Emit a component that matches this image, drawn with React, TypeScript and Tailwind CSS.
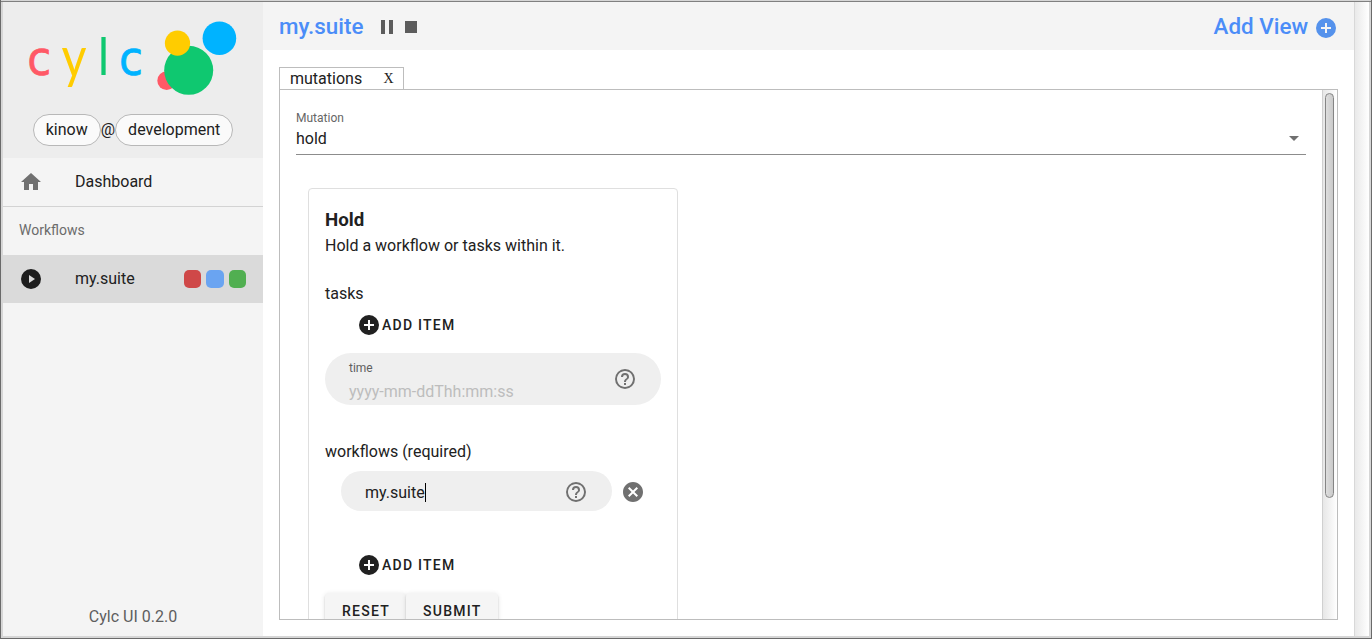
import type { ReactNode } from 'react';

const icons = {
  home: 'M10,20V14H14V20H19V12H22L12,3L2,12H5V20H10Z',
  play: 'M10,16V8L16,12M12,2A10,10 0 0,0 2,12A10,10 0 0,0 12,22A10,10 0 0,0 22,12A10,10 0 0,0 12,2Z',
  pause: 'M14,19H18V5H14M6,19H10V5H6V19Z',
  stop: 'M18,18H6V6H18V18Z',
  plus: 'M17,13H13V17H11V13H7V11H11V7H13V11H17M12,2A10,10 0 0,0 2,12A10,10 0 0,0 12,22A10,10 0 0,0 22,12A10,10 0 0,0 12,2Z',
  help: 'M11,18H13V16H11V18M12,2A10,10 0 0,0 2,12A10,10 0 0,0 12,22A10,10 0 0,0 22,12A10,10 0 0,0 12,2M12,20C7.59,20 4,16.41 4,12C4,7.59 7.59,4 12,4C16.41,4 20,7.59 20,12C20,16.41 16.41,20 12,20M12,6A4,4 0 0,0 8,10H10A2,2 0 0,1 12,8A2,2 0 0,1 14,10C14,12 11,11.75 11,15H13C13,12.75 16,12.5 16,10A4,4 0 0,0 12,6Z',
  close: 'M12,2C17.53,2 22,6.47 22,12C22,17.53 17.53,22 12,22C6.47,22 2,17.53 2,12C2,6.47 6.47,2 12,2M15.59,7L12,10.59L8.41,7L7,8.41L10.59,12L7,15.59L8.41,17L12,13.41L15.59,17L17,15.59L13.41,12L17,8.41L15.59,7Z',
  menuDown: 'M7,10L12,15L17,10H7Z',
};

function Icon({ name, className }: { name: keyof typeof icons; className: string }) {
  return (
    <svg viewBox="0 0 24 24" className={`size-6 shrink-0 fill-current ${className}`}>
      <path d={icons[name]} />
    </svg>
  );
}

function Logo() {
  return (
    <svg viewBox="0 0 260 112" className="h-[112px] w-[260px] shrink-0">
      <g fontFamily="'DejaVu Sans', sans-serif" fontSize="48.5" strokeWidth="0.7">
        <text x="24.3" y="73" fill="#ff5966" stroke="#ff5966" textLength="24" lengthAdjust="spacingAndGlyphs">c</text>
        <text x="58.6" y="75" fill="#ffcc00" fontFamily="Lato, sans-serif" fontSize="57" textLength="25" lengthAdjust="spacingAndGlyphs">y</text>
        <text x="94" y="72.8" fill="#0fc870" fontSize="50" textLength="13" lengthAdjust="spacingAndGlyphs">l</text>
        <text x="116" y="73" fill="#00b3ff" stroke="#00b3ff" textLength="24" lengthAdjust="spacingAndGlyphs">c</text>
      </g>
      <circle cx="163.7" cy="78.7" r="9.4" fill="#ff5966" />
      <circle cx="185.7" cy="68.3" r="24.5" fill="#0fc870" />
      <circle cx="174.5" cy="41.2" r="12.6" fill="#ffcc00" />
      <circle cx="216.4" cy="36.2" r="16.8" fill="#00b3ff" />
    </svg>
  );
}

function Chip({ children }: { children: ReactNode }) {
  return (
    <span className="flex h-8 items-center rounded-full border border-[#b8b8b8] bg-[#fafafa] px-3">{children}</span>
  );
}

function AddItem() {
  return (
    <div className="flex h-9 items-center pl-8 text-sm font-medium">
      <Icon name="plus" className="text-[#212121]" />
      <span className="ml-px tracking-[1.25px]">ADD ITEM</span>
    </div>
  );
}

function Sidebar() {
  return (
    <aside className="flex w-[260px] shrink-0 flex-col bg-[#f4f4f4]">
      <div className="flex h-[156px] flex-col items-center bg-[#ededed]">
        <Logo />
        <div className="flex items-center">
          <Chip>kinow</Chip>
          <span>@</span>
          <Chip>development</Chip>
        </div>
      </div>
      <div className="flex h-[49px] items-center border-b border-[#d3d3d3] pl-4">
        <Icon name="home" className="text-[#707070]" />
        <span className="ml-8">Dashboard</span>
      </div>
      <div className="flex h-12 items-center pb-0.5 pl-4 text-sm text-[#6b6b6b]">Workflows</div>
      <div className="flex h-12 items-center bg-[#dadada] pl-4">
        <Icon name="play" className="text-[#1e1e1e]" />
        <span className="ml-8 flex-1">my.suite</span>
        <div className="mr-[17px] flex gap-[5px]">
          <span className="size-[17.5px] rounded-[5px] bg-[#cf4848]" />
          <span className="size-[17.5px] rounded-[5px] bg-[#6aa4f1]" />
          <span className="size-[17.5px] rounded-[5px] bg-[#51af51]" />
        </div>
      </div>
      <div className="mt-auto pb-[7px] text-center text-[#5e5e5e]">Cylc UI 0.2.0</div>
    </aside>
  );
}

function HoldCard() {
  return (
    <section className="ml-3 mt-[33px] w-[370px] rounded border border-[#dfdfdf] px-4 pt-[18px]">
      <h3 className="h-[27px] text-[18.72px] font-bold leading-[26px]">Hold</h3>
      <p className="h-6">Hold a workflow or tasks within it.</p>
      <div className="mt-6 h-6">tasks</div>
      <div className="mt-px"><AddItem /></div>
      <div className="mt-[10px] flex h-[52px] items-center justify-between rounded-full bg-[#efefef] px-6">
        <div className="pt-[5px]">
          <div className="h-[21px] text-xs leading-5 text-[#606060]">time</div>
          <div className="h-[26px] leading-[26px] text-[#bdbdbd]">yyyy-mm-ddThh:mm:ss</div>
        </div>
        <Icon name="help" className="text-[#707070]" />
      </div>
      <div className="mt-[35px] h-6">workflows (required)</div>
      <div className="mt-[7px] flex h-10 items-center pl-4">
        <div className="flex h-10 w-[271px] items-center rounded-full bg-[#efefef] px-6 pt-0.5">
          <span className="pt-0.5">my.suite</span>
          <span className="h-[19px] w-px bg-black" />
          <Icon name="help" className="ml-auto text-[#707070]" />
        </div>
        <Icon name="close" className="ml-[9px] mt-0.5 text-[#707070]" />
      </div>
      <div className="mt-9"><AddItem /></div>
      <div className="mt-[10px] flex h-9 text-sm font-medium tracking-[1.25px]">
        <button className="rounded bg-[#f5f5f5] pl-[17px] pr-4 shadow-[0_3px_1px_-2px_rgba(0,0,0,.2),0_2px_2px_0_rgba(0,0,0,.14),0_1px_5px_0_rgba(0,0,0,.12)]">RESET</button>
        <button className="rounded bg-[#f5f5f5] pl-[17px] pr-4 shadow-[0_3px_1px_-2px_rgba(0,0,0,.2),0_2px_2px_0_rgba(0,0,0,.14),0_1px_5px_0_rgba(0,0,0,.12)]">SUBMIT</button>
      </div>
    </section>
  );
}

export default function App() {
  return (
    <div className="h-[639px] w-[1372px] overflow-hidden border-x border-b border-[#6a6a6a] bg-[#d6d6d6] font-[Roboto,sans-serif] text-base leading-6 text-[#212121]">
      <div className="mt-px flex h-[637px] border-t border-[#808080] pb-[2px] pl-[2px] pr-[2px]">
        <Sidebar />
        <main className="flex min-w-0 flex-1 flex-col bg-white">
          <header className="flex h-12 shrink-0 items-center bg-[#f4f4f4] pl-4 pr-4 text-[#4b8df8]">
            <span className="text-[22.4px] font-medium">my.suite</span>
            <Icon name="pause" className="ml-3 mt-0.5 text-[#5c5c5c]" />
            <Icon name="stop" className="mt-0.5 text-[#5c5c5c]" />
            <span className="ml-auto text-[22.4px] font-medium">Add View</span>
            <Icon name="plus" className="ml-1.5 mt-[3px] text-[#5592ec]" />
          </header>
          <div className="mx-4 mt-[17px] flex h-[22px]">
            <div className="flex w-[125px] items-center justify-between border-x border-t border-[#bdbdbd] bg-white pl-[10px] pr-[9.5px]">
              <span className="pt-px">mutations</span>
              <span className="pt-px font-['Liberation_Serif',serif] text-[14px]">X</span>
            </div>
          </div>
          <div className="mx-4 flex h-[531px] border border-[#bdbdbd]">
            <div className="min-w-0 flex-1 overflow-hidden px-4">
              <div className="flex h-[65px] flex-col border-b border-[#8c8c8c] pt-[18px]">
                <span className="h-5 text-xs leading-5 text-[#666]">Mutation</span>
                <div className="-mt-px flex items-center justify-between">
                  <span>hold</span>
                  <Icon name="menuDown" className="-mt-0.5 text-[#707070]" />
                </div>
              </div>
              <HoldCard />
            </div>
            <div className="w-[15px] border-l border-[#d0d0d0] bg-linear-to-r from-[#e7e7e7] to-white pl-[2px] pt-[3px]">
              <div className="h-[405px] w-[9px] rounded-full border border-[#858585] bg-linear-to-r from-[#dedede] to-[#cacaca]" />
            </div>
          </div>
        </main>
        <div className="w-[15px] border-l border-[#d8d8d8] bg-linear-to-r from-[#e9e9e9] to-white" />
      </div>
    </div>
  );
}
